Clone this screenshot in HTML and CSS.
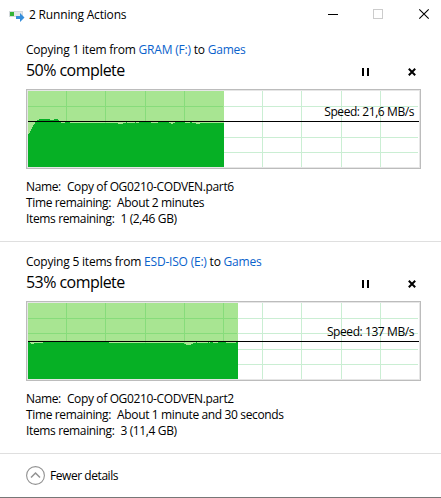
FILE: index.html
```html
<!DOCTYPE html>
<html lang="en">
<head>
<meta charset="utf-8">
<title>2 Running Actions</title>
<link rel="stylesheet" href="styles.css">
</head>
<body>
<div class="window">
  <header class="titlebar">
    <svg class="app-icon" width="16" height="16" viewBox="0 0 16 16">
      <rect x="0" y="3" width="14" height="6" fill="#d5dadd"/>
      <rect x="1" y="4" width="12" height="4" fill="#e5e8ea"/>
      <rect x="1" y="4" width="4" height="4" fill="#35b336"/>
      <path d="M7 8h4V5l4.500 4.500L11 14v-3H7z" fill="#368edb"/>
    </svg>
    <span class="caption">2 Running Actions</span>
    <svg class="controls" width="102" height="12" viewBox="0 0 102 12" fill="none" shape-rendering="crispEdges">
      <path d="M0 6.500h10" stroke="#000"/>
      <rect x="45.500" y="1.500" width="9" height="9" stroke="#ccc"/>
      <path d="M91.300 1.300l9.400 9.400M100.700 1.300l-9.400 9.400" stroke="#000" stroke-width="1.100" shape-rendering="auto"/>
    </svg>
  </header>

  <section class="job">
    <p class="route">Copying 1 item from <a>GRAM (F:)</a> to <a>Games</a></p>
    <div class="progress">
      <h2>50% complete</h2>
      <svg class="actions" width="54" height="8" viewBox="0 0 54 8">
        <path d="M0 0h2v8H0zM5 0h2v8H5z"/>
        <path d="M46.800 .8l6.400 6.400M53.200 .8l-6.400 6.400" stroke="#000" stroke-width="2"/>
      </svg>
    </div>
    <div class="chart">
      <svg width="391" height="76" viewBox="0 0 391 76" shape-rendering="crispEdges">
        <path class="grid" d="M234 0h1v76h-1zM273 0h1v76h-1zM313 0h1v76h-1zM352 0h1v76h-1zM196 15h194v1H196zM196 46h194v1H196zM196 61h194v1H196z"/>
        <rect class="done" width="196" height="76"/>
        <path class="grid-done" d="M38 0h1v76h-1zM77 0h1v76h-1zM117 0h1v76h-1zM156 0h1v76h-1zM0 15h195v1H0z"/>
        <path class="speed-area" d="M0 76V43H1V42H2V40H3V38H4V36H5V34H6V33H7V31H8V30H9V29H11V28H22V29H26V28H30V29H31V31H33V32H37V31H42V32H90V33H95V32H98V31H99V32H107V31H108V32H111V31H123V32H130V31H141V32H143V33H145V32H147V31H157V32H162V31H164V32H168V33H172V32H196V76z"/>
        <rect y="30" width="391" height="1"/>
      </svg>
      <span class="speed">Speed: 21,6 MB/s</span>
    </div>
    <dl class="details">
      <div><dt>Name:</dt><dd>Copy of OG0210-CODVEN.part6</dd></div>
      <div><dt>Time remaining:</dt><dd>About 2 minutes</dd></div>
      <div><dt>Items remaining:</dt><dd>1 (2,46 GB)</dd></div>
    </dl>
  </section>

  <section class="job">
    <p class="route">Copying 5 items from <a>ESD-ISO (E:)</a> to <a>Games</a></p>
    <div class="progress">
      <h2>53% complete</h2>
      <svg class="actions" width="54" height="8" viewBox="0 0 54 8">
        <path d="M0 0h2v8H0zM5 0h2v8H5z"/>
        <path d="M46.800 .8l6.400 6.400M53.200 .8l-6.400 6.400" stroke="#000" stroke-width="2"/>
      </svg>
    </div>
    <div class="chart">
      <svg width="391" height="76" viewBox="0 0 391 76" shape-rendering="crispEdges">
        <path class="grid" d="M234 0h1v76h-1zM273 0h1v76h-1zM313 0h1v76h-1zM352 0h1v76h-1zM210 15h180v1H210zM210 30h180v1H210zM210 46h180v1H210zM210 61h180v1H210z"/>
        <rect class="done" width="210" height="76"/>
        <path class="grid-done" d="M38 0h1v76h-1zM77 0h1v76h-1zM117 0h1v76h-1zM156 0h1v76h-1zM195 0h1v76h-1zM0 15h209v1H0zM0 30h209v1H0z"/>
        <path class="speed-area" d="M0 76V39H2V40H3V41H6V40H15V39H81V40H156V41H158V42H163V41H165V40H168V39H169V40H180V39H181V40H182V39H185V40H190V39H198V40H208V39H210V76z"/>
        <rect y="38" width="391" height="1"/>
      </svg>
      <span class="speed low">Speed: 137 MB/s</span>
    </div>
    <dl class="details">
      <div><dt>Name:</dt><dd>Copy of OG0210-CODVEN.part2</dd></div>
      <div><dt>Time remaining:</dt><dd>About 1 minute and 30 seconds</dd></div>
      <div><dt>Items remaining:</dt><dd>3 (11,4 GB)</dd></div>
    </dl>
  </section>

  <footer class="footer">
    <svg width="19" height="19" viewBox="0 0 19 19" fill="none">
      <circle cx="9.500" cy="9.500" r="8.900" stroke="#929292" stroke-width="1.100"/>
      <path d="M5 11.500L9.500 7l4.500 4.500" stroke="#929292" stroke-width="1.500"/>
    </svg>
    <span>Fewer details</span>
  </footer>
</div>
</body>
</html>
```
FILE: styles.css
```css
* { box-sizing: border-box; margin: 0; padding: 0; }

body {
  background: #fff;
  color: #000;
  font: 12px/16px "Open Sans", "Noto Sans", sans-serif;
  letter-spacing: -0.36px;
}

svg { display: block; flex: none; }

.window {
  width: 441px;
  height: 498px;
  display: flex;
  flex-direction: column;
  border-bottom: 1px solid #777;
  overflow: hidden;
}

.titlebar {
  height: 30px;
  flex: none;
  display: flex;
  align-items: flex-start;
  padding: 6px 11px 0 9px;
}
.app-icon { margin-top: 2px; }
.caption {
  margin: 1px 0 0 4px;
  letter-spacing: -0.18px;
  white-space: nowrap;
}
.controls { margin: 2px 0 0 auto; }

.job {
  height: 212px;
  flex: none;
  padding: 12px 20px 0 26px;
  border-bottom: 1px solid #dfdfdf;
}

.route {
  letter-spacing: -0.21px;
  white-space: pre;
}
.route a { color: #0a62cc; }

.progress {
  display: flex;
  justify-content: space-between;
  height: 31px;
  padding: 2px 5px 0 0;
}
.progress h2 {
  font-size: 16px;
  font-weight: 400;
  line-height: 20px;
  letter-spacing: -0.55px;
}
.actions { margin-top: 8px; }

.chart {
  position: relative;
  width: 395px;
  height: 80px;
  border: 1px solid #bcbcbc;
  outline: 1px solid #e6e6e6;
  outline-offset: -2px;
  padding: 1px;
}
.grid { fill: #caeed3; }
.done { fill: #a8e592; }
.grid-done { fill: #87dc7b; }
.speed-area { fill: #06b025; }
.speed {
  position: absolute;
  right: 6px;
  top: 14px;
  letter-spacing: -0.42px;
  white-space: nowrap;
}
.speed.low { top: 22px; }

.details { padding-top: 10px; white-space: nowrap; }
.details div { display: flex; gap: 6px; }

.footer {
  display: flex;
  align-items: flex-start;
  gap: 5px;
  padding: 12px 0 0 26px;
}
.footer span {
  margin-top: 2px;
  letter-spacing: -0.44px;
}
```
